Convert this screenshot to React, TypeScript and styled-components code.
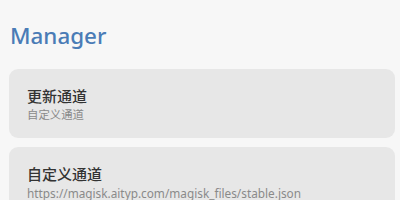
import React from "react";
import styled, { createGlobalStyle } from "styled-components";

const Global = createGlobalStyle`
  html, body { margin: 0; padding: 0; background: #f7f7f7; }
  body { font-family: "Noto Sans", "Noto Sans CJK SC", sans-serif; }
`;

const Page = styled.div`
  display: flex;
  flex-direction: column;
  padding: 0 5px 0 9px;
  width: 400px;
  height: 200px;
  box-sizing: border-box;
  overflow: hidden;
`;

const Heading = styled.h1`
  margin: 0;
  padding: 21px 0 18px 1px;
  font-size: 22.4px;
  line-height: 30px;
  font-weight: 500;
  color: #4a7cb6;
`;

const List = styled.div`
  display: flex;
  flex-direction: column;
  gap: 9px;
`;

const Card = styled.div`
  background: #e7e7e7;
  border-radius: 9px;
  padding: 17px 18px 16px;
  display: flex;
  flex-direction: column;
  gap: 2px;
`;

const Title = styled.div`
  font-size: 15px;
  line-height: 20px;
  color: #333;
  font-weight: 500;
`;

const Sub = styled.div<{ $latin?: boolean }>`
  font-size: ${(p) => (p.$latin ? "11.8px" : "11.4px")};
  line-height: 14px;
  color: #8a8a8a;
`;

export default function App() {
  return (
    <>
      <Global />
      <Page>
        <Heading>Manager</Heading>
        <List>
          <Card>
            <Title>更新通道</Title>
            <Sub>自定义通道</Sub>
          </Card>
          <Card>
            <Title>自定义通道</Title>
            <Sub $latin>https://magisk.aityp.com/magisk_files/stable.json</Sub>
          </Card>
        </List>
      </Page>
    </>
  );
}
